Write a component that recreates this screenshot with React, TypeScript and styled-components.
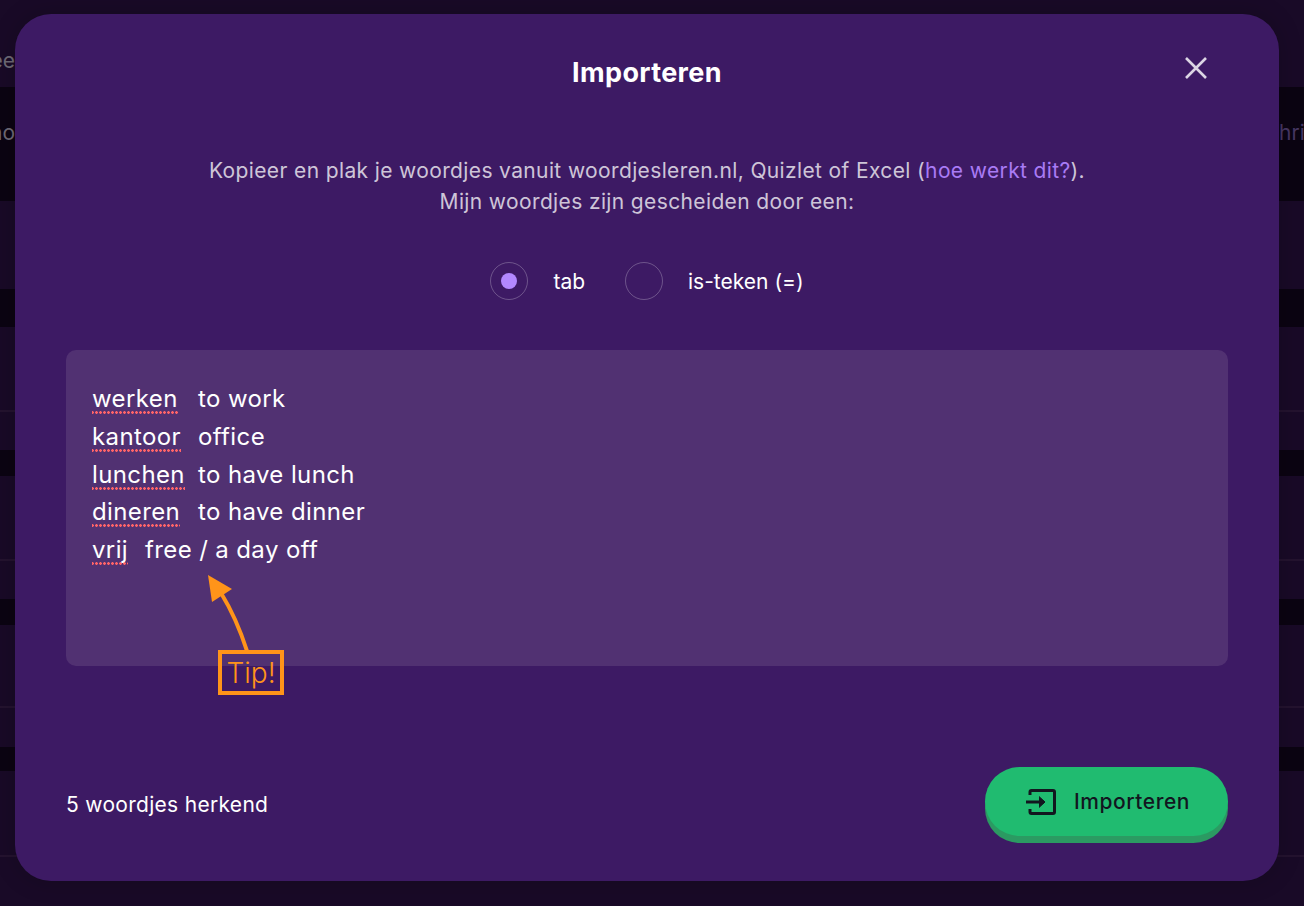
import styled, { createGlobalStyle } from "styled-components";

const green = "#20bb70";
const orange = "#ff9419";

const words = [
    ["werken", "to work"],
    ["kantoor", "office"],
    ["lunchen", "to have lunch"],
    ["dineren", "to have dinner"],
    ["vrij", "free / a day off"],
];

const GlobalStyle = createGlobalStyle`
    html, body {
        margin: 0;
        background: #0b0412;
        font-family: Inter, "Noto Sans", sans-serif;
    }
    * {
        box-sizing: border-box;
    }
`;

const Page = styled.div`
    position: relative;
    width: 1304px;
    height: 906px;
    overflow: hidden;
    background: #0b0412;
`;

const Backdrop = styled.div`
    display: flex;
    flex-direction: column;
`;

const Band = styled.div<{ $h: number; $dark?: boolean; $line?: boolean; $pad?: number }>`
    height: ${(p) => p.$h}px;
    padding-top: ${(p) => p.$pad ?? 0}px;
    display: flex;
    justify-content: space-between;
    align-items: flex-start;
    background: ${(p) => (p.$dark ? "#0b0412" : "#190a27")};
    border-bottom: ${(p) => (p.$line ? "2px solid #24132f" : "none")};
`;

const PeekLeft = styled.div`
    width: 15px;
    overflow: hidden;
    display: flex;
    justify-content: flex-end;
    font-size: 21px;
    line-height: 24px;
    color: #6f6a76;
    white-space: nowrap;
`;

const PeekRight = styled.div`
    width: 25px;
    overflow: hidden;
    font-size: 21px;
    line-height: 24px;
    color: #473763;
    white-space: nowrap;
`;

const Overlay = styled.div`
    position: absolute;
    inset: 0;
    padding: 14px 25px 25px 15px;
    display: flex;
`;

const Modal = styled.div`
    position: relative;
    flex: 1;
    background: #3d1a64;
    border-radius: 36px;
    padding: 0 51px;
    display: flex;
    flex-direction: column;
    box-shadow: 0 0 24px rgba(0, 0, 0, 0.2);
    color: #fff;
`;

const Title = styled.h2`
    margin: 41px 0 0;
    height: 36px;
    line-height: 36px;
    text-align: center;
    font-size: 27px;
    font-weight: 700;
    letter-spacing: 0.35px;
`;

const CloseButton = styled.button`
    position: absolute;
    top: 40px;
    right: 69px;
    width: 28px;
    height: 28px;
    padding: 0;
    border: none;
    background: none;
    color: #dcd5e4;
`;

const Intro = styled.p`
    margin: 64px 0 0;
    font-size: 21px;
    letter-spacing: 0.37px;
    line-height: 31px;
    text-align: center;
    color: rgba(255, 255, 255, 0.76);
`;

const HelpLink = styled.a`
    color: #a97bf5;
`;

const RadioRow = styled.div`
    margin-top: 45px;
    display: flex;
    justify-content: center;
    align-items: center;
`;

const RadioOption = styled.label`
    display: flex;
    align-items: center;
    gap: 25px;
    font-size: 21px;
    margin-right: 40px;

    &:last-child {
        margin-right: 0;
    }
`;

const RadioCircle = styled.span<{ $checked?: boolean }>`
    width: 38px;
    height: 38px;
    border-radius: 50%;
    border: 1px solid rgba(255, 255, 255, 0.25);
    display: flex;
    align-items: center;
    justify-content: center;

    &::after {
        content: "";
        display: ${(p) => (p.$checked ? "block" : "none")};
        width: 16px;
        height: 16px;
        border-radius: 50%;
        background: #b388ff;
    }
`;

const WordsBox = styled.div`
    margin-top: 50px;
    height: 316px;
    background: #513172;
    border-radius: 10px;
    padding: 30px 26px;
    font-size: 24px;
    letter-spacing: 0.38px;
    line-height: 37.8px;
    white-space: pre;
    tab-size: 53px;
`;

const Misspelled = styled.span`
    background-image: radial-gradient(circle at 1.5px 1.5px, #ff6468 1.35px, transparent 1.45px);
    background-size: 4px 3px;
    background-repeat: repeat-x;
    background-position: -1px calc(100% - 2px);
    padding-bottom: 3px;
`;

const Annotation = styled.svg`
    position: absolute;
    left: 175px;
    top: 557px;
`;

const TipLabel = styled.div`
    position: absolute;
    left: 203px;
    top: 636px;
    width: 66px;
    height: 45px;
    border: 4px solid ${orange};
    color: ${orange};
    font-size: 28px;
    font-weight: 300;
    line-height: 38px;
    text-align: center;
`;

const Footer = styled.div`
    margin-top: 101px;
    display: flex;
    justify-content: space-between;
    align-items: flex-start;
`;

const Recognised = styled.span`
    margin-top: 25px;
    font-size: 21px;
    letter-spacing: 0.3px;
    line-height: 26px;
`;

const ImportButton = styled.button`
    width: 243px;
    height: 69px;
    margin-bottom: 7px;
    border: none;
    border-radius: 36px;
    background: ${green};
    box-shadow: 0 7px 0 #2b9a62;
    display: flex;
    align-items: center;
    justify-content: center;
    gap: 18px;
    padding: 0 0 0 3px;
    color: #12161f;
    font-family: inherit;
    font-size: 21px;
    font-weight: 500;
    letter-spacing: 0.55px;
`;

export default function App() {
    return (
        <Page>
            <GlobalStyle />
            <Backdrop>
                <Band $h={87} $pad={49}>
                    <PeekLeft>Twee</PeekLeft>
                </Band>
                <Band $h={114} $dark $pad={34}>
                    <PeekLeft>Nederlandsho</PeekLeft>
                    <PeekRight>hrijf</PeekRight>
                </Band>
                <Band $h={88} />
                <Band $h={38} $dark />
                <Band $h={85} $line />
                <Band $h={38} />
                <Band $h={26} $dark />
                <Band $h={85} $line />
                <Band $h={38} />
                <Band $h={26} $dark />
                <Band $h={83} $line />
                <Band $h={39} />
                <Band $h={24} $dark />
                <Band $h={86} $line />
                <Band $h={49} />
            </Backdrop>
            <Overlay>
                <Modal>
                    <Title>Importeren</Title>
                    <CloseButton aria-label="Sluiten">
                        <svg width="28" height="28" viewBox="0 0 28 28" fill="none" stroke="currentColor" strokeWidth="2.6">
                            <path d="M4 4 L24 24 M24 4 L4 24" />
                        </svg>
                    </CloseButton>
                    <Intro>
                        Kopieer en plak je woordjes vanuit woordjesleren.nl, Quizlet of Excel (<HelpLink>hoe werkt dit?</HelpLink>).
                        <br />
                        Mijn woordjes zijn gescheiden door een:
                    </Intro>
                    <RadioRow>
                        <RadioOption>
                            <RadioCircle $checked />
                            tab
                        </RadioOption>
                        <RadioOption>
                            <RadioCircle />
                            is-teken (=)
                        </RadioOption>
                    </RadioRow>
                    <WordsBox>
                        {words.map(([word, meaning]) => (
                            <div key={word}>
                                <Misspelled>{word}</Misspelled>
                                {"\t" + meaning}
                            </div>
                        ))}
                    </WordsBox>
                    <Annotation width="70" height="90" viewBox="0 0 70 90" fill="none">
                        <path d="M31 22 C39 35 50 58 57 80" stroke={orange} strokeWidth="4" />
                        <path d="M18 4 L42 18 L22 31 Z" fill={orange} />
                    </Annotation>
                    <TipLabel>Tip!</TipLabel>
                    <Footer>
                        <Recognised>5 woordjes herkend</Recognised>
                        <ImportButton>
                            <svg width="30" height="26" viewBox="0 0 30 26" fill="none" stroke="currentColor" strokeWidth="3">
                                <path d="M4 6 V3 Q4 1.5 5.5 1.5 H27 Q28.5 1.5 28.5 3 V23 Q28.5 24.5 27 24.5 H5.5 Q4 24.5 4 23 V20" />
                                <path d="M0 13 H18" />
                                <path d="M13 7.5 L19 13 L13 18.5" fill="currentColor" strokeWidth="1" />
                            </svg>
                            Importeren
                        </ImportButton>
                    </Footer>
                </Modal>
            </Overlay>
        </Page>
    );
}
